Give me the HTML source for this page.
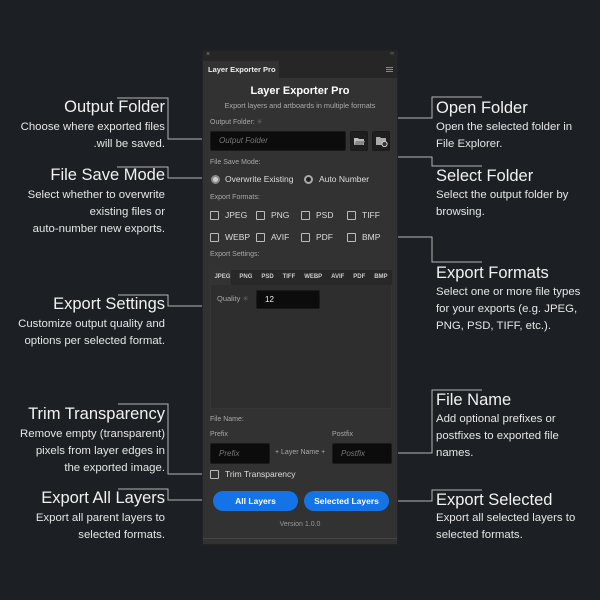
<!DOCTYPE html>
<html><head><meta charset="utf-8">
<style>
*{margin:0;padding:0;box-sizing:border-box}
body{width:600px;height:600px;background:#1c1f23;position:relative;overflow:hidden;font-family:"Liberation Sans",sans-serif}
.a{position:absolute;color:#f2f2f2;white-space:nowrap}
.t{font-size:16.5px;line-height:18px}
.d{font-size:11.4px;line-height:17px;color:#e6e6e6}
.r{text-align:right;right:435px}
.l{left:436px}
#panel{position:absolute;left:202px;top:50px;width:196px;height:495px;background:#323232;border:1px solid #222}
.p{position:absolute;white-space:nowrap}
.lbl{font-size:7px;color:#a8a8a8}
.inp{position:absolute;background:#0c0c0c;border-radius:2px;border:1px solid #1a1a1a}
.ph{font-size:8px;color:#777;font-style:italic}
.cb{position:absolute;width:9px;height:9px;border:1.3px solid #bbb;border-radius:1px}
.ct{font-size:8.5px;color:#ddd}
.btn{position:absolute;height:20px;background:#1473e6;border-radius:10px;color:#fff;font-weight:bold;font-size:8.5px;text-align:center;line-height:20px}
</style></head><body>
<svg width="600" height="600" style="position:absolute;left:0;top:0" fill="none" stroke="#b5b5b5" stroke-width="1">
<polyline points="117,98 168,98 168,139 211,139"/>
<polyline points="117,167 168,167 168,178 211,178"/>
<polyline points="118,295 168,295 168,306 211,306"/>
<polyline points="118,404 168,404 168,474 211,474"/>
<polyline points="118,489 168,489 168,500 212,500"/>
<polyline points="482,97 432,97 432,118 358,118 358,129"/>
<polyline points="382,151 382,157 432,157 432,166 482,166"/>
<polyline points="380,237 432,237 432,262 482,262"/>
<polyline points="391,453 432,453 432,390 482,390"/>
<polyline points="388,501 432,501 432,490 482,490"/>
</svg>

<div class="a t r" style="top:98px">Output Folder</div>
<div class="a d r" style="top:119px">Choose where exported files</div>
<div class="a d r" style="top:136px">.will be saved.</div>
<div class="a t r" style="top:166px">File Save Mode</div>
<div class="a d r" style="top:187px">Select whether to overwrite</div>
<div class="a d r" style="top:204px">existing files or</div>
<div class="a d r" style="top:221px">auto-number new exports.</div>
<div class="a t r" style="top:295px">Export Settings</div>
<div class="a d r" style="top:316px">Customize output quality and</div>
<div class="a d r" style="top:333px">options per selected format.</div>
<div class="a t r" style="top:405px">Trim Transparency</div>
<div class="a d r" style="top:426px">Remove empty (transparent)</div>
<div class="a d r" style="top:443px">pixels from layer edges in</div>
<div class="a d r" style="top:460px">the exported image.</div>
<div class="a t r" style="top:489px">Export All Layers</div>
<div class="a d r" style="top:510px">Export all parent layers to</div>
<div class="a d r" style="top:527px">selected formats.</div>

<div class="a t l" style="top:99px">Open Folder</div>
<div class="a d l" style="top:119px">Open the selected folder in</div>
<div class="a d l" style="top:136px">File Explorer.</div>
<div class="a t l" style="top:167px">Select Folder</div>
<div class="a d l" style="top:187px">Select the output folder by</div>
<div class="a d l" style="top:204px">browsing.</div>
<div class="a t l" style="top:264px">Export Formats</div>
<div class="a d l" style="top:284px">Select one or more file types</div>
<div class="a d l" style="top:301px">for your exports (e.g. JPEG,</div>
<div class="a d l" style="top:318px">PNG, PSD, TIFF, etc.).</div>
<div class="a t l" style="top:391px">File Name</div>
<div class="a d l" style="top:411px">Add optional prefixes or</div>
<div class="a d l" style="top:428px">postfixes to exported file</div>
<div class="a d l" style="top:445px">names.</div>
<div class="a t l" style="top:491px">Export Selected</div>
<div class="a d l" style="top:510px">Export all selected layers to</div>
<div class="a d l" style="top:527px">selected formats.</div>

<div id="panel">
 <div class="p" style="left:0;top:0;width:194px;height:10px;background:#262626"></div>
 <div class="p" style="left:3px;top:0;font-size:7px;color:#888">×</div>
 <div class="p" style="right:3px;top:0;font-size:6px;color:#888">‹‹</div>
 <div class="p" style="left:0;top:10px;width:194px;height:17px;background:#262626"></div>
 <div class="p" style="left:0;top:10px;width:76px;height:17px;background:#323232"></div>
 <div class="p" style="left:5px;top:14px;font-size:7.5px;font-weight:bold;color:#eee">Layer Exporter Pro</div>
 <div class="p" style="right:4px;top:16px;width:7px;height:5px;border-top:1px solid #888;border-bottom:1px solid #888"></div>
 <div class="p" style="right:4px;top:18px;width:7px;height:1px;background:#888"></div>
 <div class="p" style="left:0;width:194px;top:34px;text-align:center;font-size:11px;font-weight:bold;color:#fff">Layer Exporter Pro</div>
 <div class="p" style="left:0;width:194px;top:50px;text-align:center;font-size:7.3px;color:#aaa">Export layers and artboards in multiple formats</div>
 <div class="p lbl" style="left:7px;top:67px">Output Folder: <span style="color:#666">✳</span></div>
 <div class="inp" style="left:7px;top:80px;width:136px;height:20px"></div>
 <div class="p ph" style="left:16px;top:85px">Output Folder</div>
 <div class="inp" style="left:147px;top:80px;width:18px;height:20px;background:#1e1e1e"></div>
 <svg class="p" style="left:150px;top:85px" width="12" height="10"><path d="M1 2h4l1 1h5v6H1z" fill="#bbb"/><path d="M1 9l2-4h9l-2 4z" fill="#888"/></svg>
 <div class="inp" style="left:169px;top:80px;width:18px;height:20px;background:#1e1e1e"></div>
 <svg class="p" style="left:172px;top:85px" width="13" height="11"><path d="M1 1h4l1 1h5v7H1z" fill="#aaa"/><circle cx="9.5" cy="8" r="2.6" fill="#333" stroke="#ccc" stroke-width="1"/></svg>
 <div class="p lbl" style="left:7px;top:108px">File Save Mode:</div>
 <div class="p" style="left:8px;top:124px;width:9px;height:9px;border-radius:50%;background:#ccc;border:2px solid #888"></div>
 <div class="p ct" style="left:22px;top:123px">Overwrite Existing</div>
 <div class="p" style="left:101px;top:124px;width:9px;height:9px;border-radius:50%;border:2px solid #aaa;background:#222"></div>
 <div class="p ct" style="left:116px;top:123px">Auto Number</div>
 <div class="p lbl" style="left:7px;top:143px">Export Formats:</div>
 <div class="cb" style="left:7px;top:160px"></div><div class="p ct" style="left:22px;top:159px">JPEG</div>
 <div class="cb" style="left:53px;top:160px"></div><div class="p ct" style="left:68px;top:159px">PNG</div>
 <div class="cb" style="left:98px;top:160px"></div><div class="p ct" style="left:113px;top:159px">PSD</div>
 <div class="cb" style="left:144px;top:160px"></div><div class="p ct" style="left:159px;top:159px">TIFF</div>
 <div class="cb" style="left:7px;top:182px"></div><div class="p ct" style="left:22px;top:181px">WEBP</div>
 <div class="cb" style="left:53px;top:182px"></div><div class="p ct" style="left:68px;top:181px">AVIF</div>
 <div class="cb" style="left:98px;top:182px"></div><div class="p ct" style="left:113px;top:181px">PDF</div>
 <div class="cb" style="left:144px;top:182px"></div><div class="p ct" style="left:159px;top:181px">BMP</div>
 <div class="p lbl" style="left:7px;top:200px">Export Settings:</div>
 <div class="p" style="left:7px;top:219px;width:182px;height:139px;background:#2e2e2e;border:1px solid #363636"></div>
 <div class="p" style="left:7px;top:219px;width:182px;height:15px;background:#282828"></div>
 <div class="p" style="left:7px;top:219px;width:21px;height:15px;background:#333"></div>
 <div class="p" style="left:7px;top:223px;width:182px;font-size:6px;font-weight:bold;color:#ccc;display:flex;justify-content:space-around">
  <span>JPEG</span><span>PNG</span><span>PSD</span><span>TIFF</span><span>WEBP</span><span>AVIF</span><span>PDF</span><span>BMP</span></div>
 <div class="p lbl" style="left:14px;top:243px;font-size:7.5px">Quality <span style="color:#666">✳</span></div>
 <div class="inp" style="left:53px;top:239px;width:64px;height:19px"></div>
 <div class="p" style="left:62px;top:244px;font-size:8px;color:#eee">12</div>
 <div class="p lbl" style="left:7px;top:365px">File Name:</div>
 <div class="p lbl" style="left:7px;top:380px">Prefix</div>
 <div class="p lbl" style="left:129px;top:380px">Postfix</div>
 <div class="inp" style="left:7px;top:392px;width:60px;height:21px"></div>
 <div class="p ph" style="left:16px;top:398px">Prefix</div>
 <div class="p lbl" style="left:72px;top:398px">+ Layer Name +</div>
 <div class="inp" style="left:129px;top:392px;width:60px;height:21px"></div>
 <div class="p ph" style="left:138px;top:398px">Postfix</div>
 <div class="cb" style="left:7px;top:419px"></div>
 <div class="p ct" style="left:22px;top:418px">Trim Transparency</div>
 <div class="btn" style="left:10px;top:440px;width:85px">All Layers</div>
 <div class="btn" style="left:101px;top:440px;width:85px">Selected Layers</div>
 <div class="p" style="left:0;width:194px;top:470px;text-align:center;font-size:7px;color:#999">Version 1.0.0</div>
 <div class="p" style="left:0;top:487px;width:194px;height:1px;background:#444"></div>
</div>
</body></html>
